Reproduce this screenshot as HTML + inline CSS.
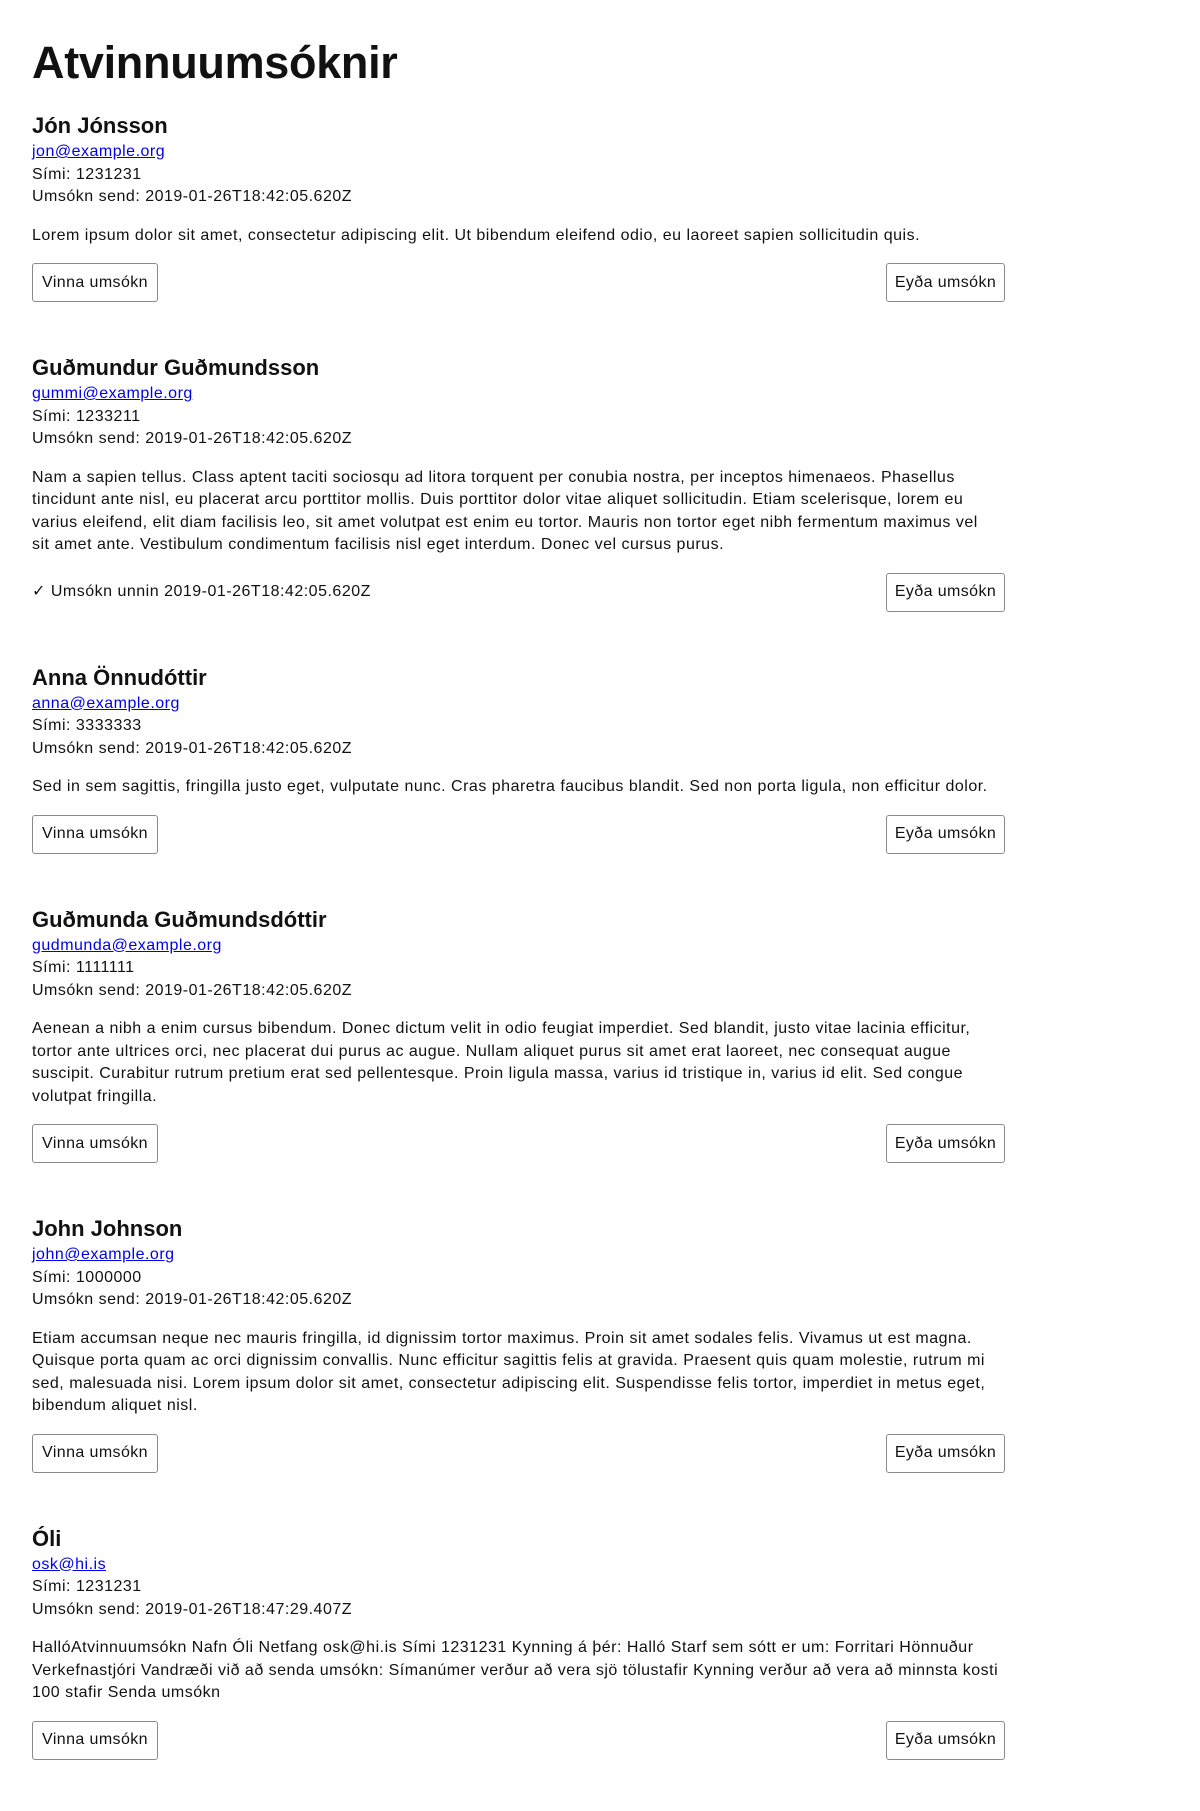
<!DOCTYPE html>
<html><head><meta charset="utf-8"><style>
html,body{margin:0;padding:0;background:#fff;}
body{width:1200px;height:1807px;overflow:hidden;font-family:"Liberation Sans",sans-serif;color:#111;font-size:16px;}
.wrap{position:absolute;left:32px;top:0;width:973px;}
h1{font-size:45px;line-height:56px;margin:35px 0 20px;font-weight:bold;letter-spacing:-0.3px;}
.s{margin-bottom:51px;}
h2{font-size:22px;line-height:30px;margin:0;font-weight:bold;}
.l{line-height:22.5px;margin:0;white-space:nowrap;letter-spacing:0.5px;}
a{color:#0000ee;text-decoration:underline;}
.p{margin-top:16px;}
.row{margin-top:16px;height:39px;display:flex;justify-content:space-between;align-items:center;}
.b{box-sizing:border-box;height:39px;border:1px solid #8a8a8a;border-radius:3px;background:#fff;font:16px "Liberation Sans",sans-serif;color:#111;display:flex;align-items:center;justify-content:center;letter-spacing:0.4px;}
.v{width:126px}.e{width:119px;margin-left:auto}
</style></head><body><div class="wrap">
<h1>Atvinnuumsóknir</h1>

<div class="s"><h2>Jón Jónsson</h2>
<div class="l"><a>jon@example.org</a></div><div class="l">Sími: 1231231</div><div class="l">Umsókn send: 2019-01-26T18:42:05.620Z</div>
<div class="p"><div class="l">Lorem ipsum dolor sit amet, consectetur adipiscing elit. Ut bibendum eleifend odio, eu laoreet sapien sollicitudin quis.</div></div>
<div class="row"><div class="b v">Vinna umsókn</div><div class="b e">Eyða umsókn</div></div></div>

<div class="s"><h2>Guðmundur Guðmundsson</h2>
<div class="l"><a>gummi@example.org</a></div><div class="l">Sími: 1233211</div><div class="l">Umsókn send: 2019-01-26T18:42:05.620Z</div>
<div class="p"><div class="l">Nam a sapien tellus. Class aptent taciti sociosqu ad litora torquent per conubia nostra, per inceptos himenaeos. Phasellus</div><div class="l">tincidunt ante nisl, eu placerat arcu porttitor mollis. Duis porttitor dolor vitae aliquet sollicitudin. Etiam scelerisque, lorem eu</div><div class="l">varius eleifend, elit diam facilisis leo, sit amet volutpat est enim eu tortor. Mauris non tortor eget nibh fermentum maximus vel</div><div class="l">sit amet ante. Vestibulum condimentum facilisis nisl eget interdum. Donec vel cursus purus.</div></div>
<div class="row"><div class="l">✓ Umsókn unnin 2019-01-26T18:42:05.620Z</div><div class="b e">Eyða umsókn</div></div></div>

<div class="s"><h2>Anna Önnudóttir</h2>
<div class="l"><a>anna@example.org</a></div><div class="l">Sími: 3333333</div><div class="l">Umsókn send: 2019-01-26T18:42:05.620Z</div>
<div class="p"><div class="l">Sed in sem sagittis, fringilla justo eget, vulputate nunc. Cras pharetra faucibus blandit. Sed non porta ligula, non efficitur dolor.</div></div>
<div class="row"><div class="b v">Vinna umsókn</div><div class="b e">Eyða umsókn</div></div></div>

<div class="s"><h2>Guðmunda Guðmundsdóttir</h2>
<div class="l"><a>gudmunda@example.org</a></div><div class="l">Sími: 1111111</div><div class="l">Umsókn send: 2019-01-26T18:42:05.620Z</div>
<div class="p"><div class="l">Aenean a nibh a enim cursus bibendum. Donec dictum velit in odio feugiat imperdiet. Sed blandit, justo vitae lacinia efficitur,</div><div class="l">tortor ante ultrices orci, nec placerat dui purus ac augue. Nullam aliquet purus sit amet erat laoreet, nec consequat augue</div><div class="l">suscipit. Curabitur rutrum pretium erat sed pellentesque. Proin ligula massa, varius id tristique in, varius id elit. Sed congue</div><div class="l">volutpat fringilla.</div></div>
<div class="row"><div class="b v">Vinna umsókn</div><div class="b e">Eyða umsókn</div></div></div>

<div class="s"><h2>John Johnson</h2>
<div class="l"><a>john@example.org</a></div><div class="l">Sími: 1000000</div><div class="l">Umsókn send: 2019-01-26T18:42:05.620Z</div>
<div class="p"><div class="l">Etiam accumsan neque nec mauris fringilla, id dignissim tortor maximus. Proin sit amet sodales felis. Vivamus ut est magna.</div><div class="l">Quisque porta quam ac orci dignissim convallis. Nunc efficitur sagittis felis at gravida. Praesent quis quam molestie, rutrum mi</div><div class="l">sed, malesuada nisi. Lorem ipsum dolor sit amet, consectetur adipiscing elit. Suspendisse felis tortor, imperdiet in metus eget,</div><div class="l">bibendum aliquet nisl.</div></div>
<div class="row"><div class="b v">Vinna umsókn</div><div class="b e">Eyða umsókn</div></div></div>

<div class="s"><h2>Óli</h2>
<div class="l"><a>osk@hi.is</a></div><div class="l">Sími: 1231231</div><div class="l">Umsókn send: 2019-01-26T18:47:29.407Z</div>
<div class="p"><div class="l">HallóAtvinnuumsókn Nafn Óli Netfang osk@hi.is Sími 1231231 Kynning á þér: Halló Starf sem sótt er um: Forritari Hönnuður</div><div class="l">Verkefnastjóri Vandræði við að senda umsókn: Símanúmer verður að vera sjö tölustafir Kynning verður að vera að minnsta kosti</div><div class="l">100 stafir Senda umsókn</div></div>
<div class="row"><div class="b v">Vinna umsókn</div><div class="b e">Eyða umsókn</div></div></div>
</div></body></html>
